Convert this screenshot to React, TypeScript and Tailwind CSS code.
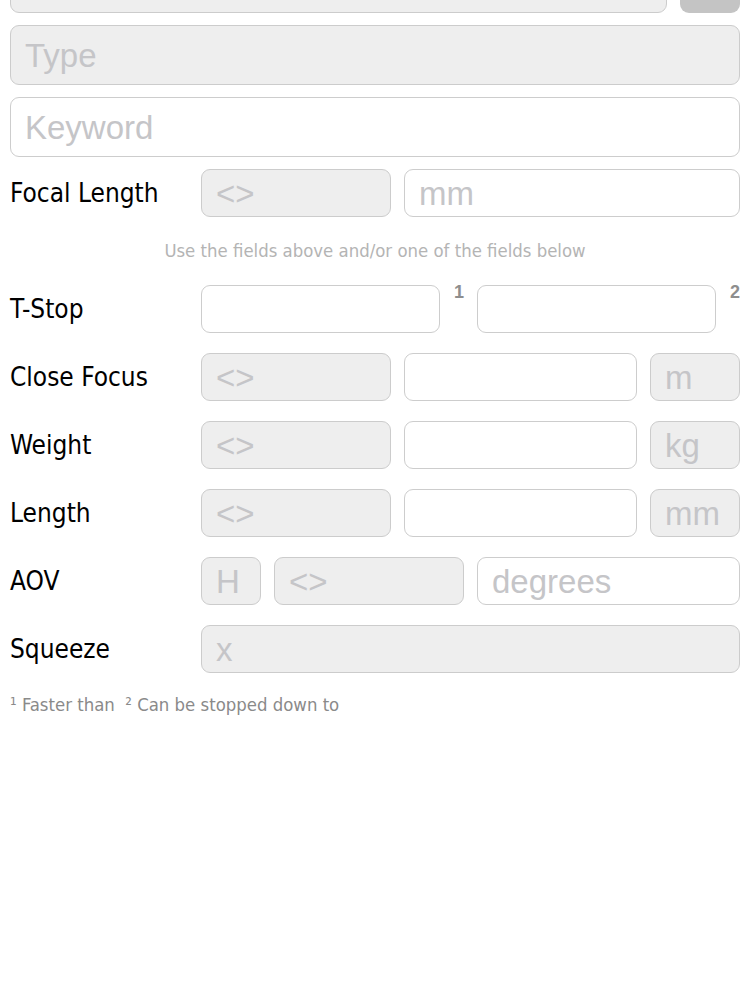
import React from "react";

const cond = { fontFamily: '"DejaVu Sans Condensed", "DejaVu Sans", sans-serif', fontStretch: "condensed" as const };
const helv = { fontFamily: '"Liberation Sans", Arial, sans-serif' };

function Box({
  text,
  gray,
  className = "",
  tall,
}: {
  text?: string;
  gray?: boolean;
  className?: string;
  tall?: boolean;
}) {
  return (
    <div
      className={
        "flex items-center rounded-[9px] border pl-[14px] text-[33px] leading-none text-[#c5c5c8] " +
        (gray ? "bg-[#eeeeee] border-[#cccccc] " : "bg-white border-[#cdcdcd] ") +
        (tall ? "h-[60px] " : "h-[48px] ") +
        className
      }
      style={helv}
    >
      {text}
    </div>
  );
}

function Row({ label, children }: { label: string; children: React.ReactNode }) {
  return (
    <div className="flex h-[48px] items-center">
      <div className="w-[191px] shrink-0 text-[26px] leading-none text-black" style={cond}>
        {label}
      </div>
      <div className="flex flex-1 items-center gap-[13px]">{children}</div>
    </div>
  );
}

export default function App() {
  return (
    <div className="flex min-h-[1000px] flex-col bg-white px-[10px]">
      <div className="-mt-[47px] flex gap-[13px]">
        <Box gray tall className="flex-1" />
        <div className="h-[60px] w-[60px] rounded-[9px] bg-[#c4c4c4]" />
      </div>
      <div className="mt-[12px] flex flex-col gap-[12px]">
        <Box gray tall text="Type" />
        <Box tall text="Keyword" />
      </div>
      <div className="mt-[12px]">
        <Row label="Focal Length">
          <Box gray text="<>" className="w-[190px]" />
          <Box text="mm" className="flex-1" />
        </Row>
      </div>
      <div className="flex h-[68px] items-center justify-center">
        <span className="text-[18.4px] leading-none text-[#b4b4b4]" style={cond}>
          Use the fields above and/or one of the fields below
        </span>
      </div>
      <div className="flex flex-col gap-[20px]">
        <Row label="T-Stop">
          <div className="flex flex-1 items-start gap-[14px]">
            <Box className="flex-1" />
            <span className="-mt-[2px] text-[18px] font-bold leading-none text-[#8e8e8e]" style={helv}>
              1
            </span>
          </div>
          <div className="flex flex-1 items-start gap-[14px]">
            <Box className="flex-1" />
            <span className="-mt-[2px] text-[18px] font-bold leading-none text-[#8e8e8e]" style={helv}>
              2
            </span>
          </div>
        </Row>
        <Row label="Close Focus">
          <Box gray text="<>" className="w-[190px]" />
          <Box className="flex-1" />
          <Box gray text="m" className="w-[90px]" />
        </Row>
        <Row label="Weight">
          <Box gray text="<>" className="w-[190px]" />
          <Box className="flex-1" />
          <Box gray text="kg" className="w-[90px]" />
        </Row>
        <Row label="Length">
          <Box gray text="<>" className="w-[190px]" />
          <Box className="flex-1" />
          <Box gray text="mm" className="w-[90px]" />
        </Row>
        <Row label="AOV">
          <Box gray text="H" className="w-[60px]" />
          <Box gray text="<>" className="w-[190px]" />
          <Box text="degrees" className="flex-1" />
        </Row>
        <Row label="Squeeze">
          <Box gray text="x" className="flex-1" />
        </Row>
      </div>
      <div className="mt-[23px] text-[18.4px] leading-none text-[#8a8a8a]" style={cond}>
        ¹ Faster than&nbsp; ² Can be stopped down to
      </div>
    </div>
  );
}
